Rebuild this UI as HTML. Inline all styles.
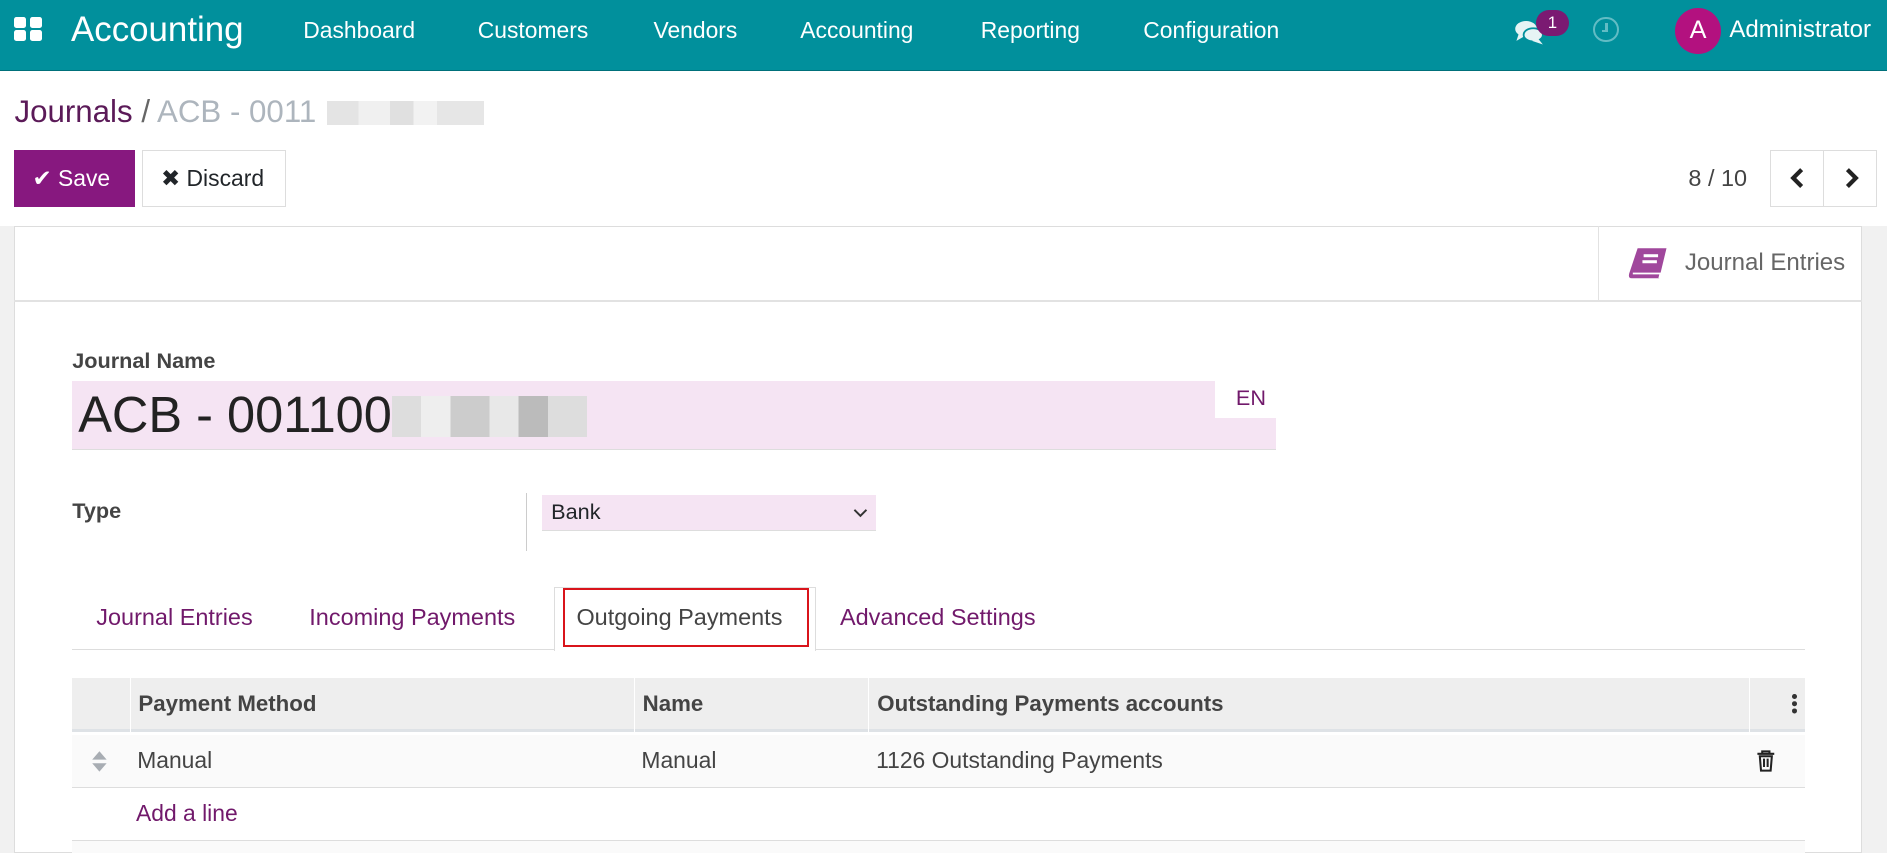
<!DOCTYPE html>
<html><head><meta charset="utf-8"><style>
*{margin:0;padding:0;box-sizing:border-box}
html,body{width:1887px;height:853px;overflow:hidden;background:#fff}
#w{zoom:1.20344;width:1568px;height:709px;position:relative;font-family:"Liberation Sans",sans-serif;color:#212529;overflow:hidden}
.a{position:absolute;white-space:nowrap}
.nav{left:0;top:0;width:1568px;height:59px;background:#01909c;border-bottom:1px solid #00707a}
.nav .m{color:#fff;font-size:19px;top:14px}
.pur{color:#71196b}
.t{font-size:19.5px}
</style></head><body><div id="w">
<div class="a nav">
 <div class="a" style="left:12px;top:14px;width:10px;height:9px;background:#fff;border-radius:2px"></div>
 <div class="a" style="left:25px;top:14px;width:10px;height:9px;background:#fff;border-radius:2px"></div>
 <div class="a" style="left:12px;top:25px;width:10px;height:9px;background:#fff;border-radius:2px"></div>
 <div class="a" style="left:25px;top:25px;width:10px;height:9px;background:#fff;border-radius:2px"></div>
 <div class="a" style="left:59px;top:8px;color:#fff;font-size:29px">Accounting</div>
 <div class="a m" style="left:252px">Dashboard</div>
 <div class="a m" style="left:397px">Customers</div>
 <div class="a m" style="left:543px">Vendors</div>
 <div class="a m" style="left:665px">Accounting</div>
 <div class="a m" style="left:815px">Reporting</div>
 <div class="a m" style="left:950px">Configuration</div>
 <svg class="a" style="left:1258px;top:15px" width="28" height="28" viewBox="0 0 28 28"><ellipse cx="10" cy="9" rx="9" ry="6.5" fill="#e6f4f5"/><path d="M4 13 L2 19 L9 15Z" fill="#e6f4f5"/><ellipse cx="16" cy="14" rx="8" ry="5.5" fill="#e6f4f5" stroke="#01909c" stroke-width="1.5"/><path d="M20 17 L24 22 L15 19Z" fill="#e6f4f5"/></svg>
 <div class="a" style="left:1276px;top:8px;width:28px;height:22px;border-radius:11px;background:#7b1a72;color:#fff;font-size:14px;text-align:center;line-height:21px">1</div>
 <div class="a" style="left:1324px;top:14px;width:21px;height:21px;border-radius:50%;border:2px solid #62bcc4"></div>
 <div class="a" style="left:1334px;top:19px;width:2px;height:7px;background:#62bcc4"></div>
 <div class="a" style="left:1331px;top:25px;width:5px;height:2px;background:#62bcc4"></div>
 <div class="a" style="left:1392px;top:7px;width:38px;height:38px;border-radius:50%;background:#b3117f;color:#fff;font-size:21px;text-align:center;line-height:38px">A</div>
 <div class="a" style="left:1437px;top:13px;color:#fff;font-size:20px">Administrator</div>
</div>
<div class="a" style="left:12px;top:78px;font-size:26px;color:#5b1a58">Journals <span style="color:#666">/</span> <span style="color:#adb5bd">ACB - 0011</span></div>
<div class="a" style="left:272px;top:84px;width:130px;height:20px;background:linear-gradient(90deg,#e4e4e4 0 20%,#f0f0f0 20% 40%,#e0e0e0 40% 55%,#f2f2f2 55% 70%,#e6e6e6 70% 100%)"></div>
<div class="a" style="left:12px;top:125px;width:100px;height:47px;background:#87187f;color:#fff;font-size:19px;line-height:47px;padding-left:15px">✔ Save</div>
<div class="a" style="left:118px;top:125px;width:120px;height:47px;border:1px solid #ddd;font-size:19px;line-height:45px;padding-left:15px">✖ Discard</div>
<div class="a" style="left:1403px;top:137px;font-size:19.5px;color:#444">8 / 10</div>
<div class="a" style="left:1471px;top:125px;width:89px;height:47px;border:1px solid #ddd"></div>
<div class="a" style="left:1515px;top:125px;width:1px;height:47px;background:#ddd"></div>
<svg class="a" style="left:1484px;top:138px" width="20" height="20"><path d="M13 3 L6 10 L13 17" fill="none" stroke="#222" stroke-width="3.5"/></svg>
<svg class="a" style="left:1528px;top:138px" width="20" height="20"><path d="M7 3 L14 10 L7 17" fill="none" stroke="#222" stroke-width="3.5"/></svg>
<div class="a" style="left:0;top:188px;width:1568px;height:521px;background:#f1f1f1"></div>
<div class="a" style="left:12px;top:188px;width:1535px;height:521px;background:#fff;border:1px solid #ddd"></div>
<div class="a" style="left:12px;top:249px;width:1535px;height:2px;background:#e2e2e2"></div>
<div class="a" style="left:1328px;top:188px;width:1px;height:62px;background:#e2e2e2"></div>
<svg class="a" style="left:1353px;top:205px" width="34" height="30" viewBox="0 0 34 30"><path d="M8 1 H32 L26 26 H3 Q0 26 1 22Z" fill="#a0479c"/><rect x="13" y="6" width="12" height="2.5" fill="#fff"/><rect x="12" y="11" width="12" height="2.5" fill="#fff"/><path d="M4 22 H27 L26 26" fill="none" stroke="#fff" stroke-width="1.5"/></svg>
<div class="a" style="left:1400px;top:207px;font-size:20px;color:#666">Journal Entries</div>
<div class="a" style="left:60px;top:289px;font-size:18px;font-weight:bold;color:#444">Journal Name</div>
<div class="a" style="left:60px;top:317px;width:1000px;height:57px;background:#f5e4f3;border-bottom:1px solid #ddd"></div>
<div class="a" style="left:1010px;top:317px;width:50px;height:30px;background:#fff"></div>
<div class="a pur" style="left:1027px;top:320px;font-size:18px">EN</div>
<div class="a" style="left:65px;top:320px;font-size:42px;color:#222">ACB - 001100</div>
<div class="a" style="left:326px;top:329px;width:162px;height:34px;background:linear-gradient(90deg,#ddd 0 15%,#eee 15% 30%,#ccc 30% 50%,#e8e8e8 50% 65%,#bbb 65% 80%,#ddd 80% 100%)"></div>
<div class="a" style="left:60px;top:414px;font-size:18px;font-weight:bold;color:#444">Type</div>
<div class="a" style="left:437px;top:410px;width:1px;height:48px;background:#ccc"></div>
<div class="a" style="left:450px;top:411px;width:278px;height:30px;background:#f5e4f3;border-bottom:1px solid #ddd;font-size:18px;line-height:28px;padding-left:8px">Bank</div>
<svg class="a" style="left:708px;top:420px" width="14" height="14"><path d="M2 4 L7 9 L12 4" fill="none" stroke="#333" stroke-width="1.6"/></svg>
<div class="a" style="left:60px;top:539px;width:1440px;height:1px;background:#ddd"></div>
<div class="a" style="left:460px;top:488px;width:218px;height:53px;background:#fff;border:1px solid #ddd;border-bottom:none"></div>
<div class="a" style="left:468px;top:489px;width:204px;height:49px;border:2px solid #d9141b"></div>
<div class="a pur t" style="left:80px;top:502px">Journal Entries</div>
<div class="a pur t" style="left:257px;top:502px">Incoming Payments</div>
<div class="a t" style="left:479px;top:502px;color:#444">Outgoing Payments</div>
<div class="a pur t" style="left:698px;top:502px">Advanced Settings</div>
<div class="a" style="left:60px;top:563px;width:1440px;height:45px;background:#eee;border-bottom:3px solid #dee2e6"></div>
<div class="a" style="left:108px;top:563px;width:1px;height:45px;background:#fff"></div>
<div class="a" style="left:527px;top:563px;width:1px;height:45px;background:#fff"></div>
<div class="a" style="left:721px;top:563px;width:1px;height:45px;background:#fff"></div>
<div class="a" style="left:1453px;top:563px;width:1px;height:45px;background:#fff"></div>
<div class="a" style="left:115px;top:574px;font-size:18.5px;font-weight:bold;color:#444">Payment Method</div>
<div class="a" style="left:534px;top:574px;font-size:18.5px;font-weight:bold;color:#444">Name</div>
<div class="a" style="left:729px;top:574px;font-size:18.5px;font-weight:bold;color:#444">Outstanding Payments accounts</div>
<div class="a" style="left:1489px;top:577px;width:4px;height:4px;background:#333;border-radius:50%;box-shadow:0 6px #333,0 12px #333"></div>
<div class="a" style="left:60px;top:611px;width:1440px;height:44px;background:#fafafa;border-bottom:1px solid #ddd"></div>
<svg class="a" style="left:76px;top:623px" width="14" height="20"><path d="M7 1 L13 8 H1Z M1 11 H13 L7 18Z" fill="#a8adb3"/></svg>
<div class="a" style="left:114px;top:621px;font-size:19px;color:#444">Manual</div>
<div class="a" style="left:533px;top:621px;font-size:19px;color:#444">Manual</div>
<div class="a" style="left:728px;top:621px;font-size:19px;color:#444">1126 Outstanding Payments</div>
<svg class="a" style="left:1458px;top:622px" width="18" height="20"><path d="M2 4 H16 M6 4 V2 H12 V4 M4 6 L5 18 H13 L14 6Z M7.5 8 V15 M10.5 8 V15" fill="none" stroke="#222" stroke-width="1.7"/></svg>
<div class="a pur" style="left:113px;top:665px;font-size:19px">Add a line</div>
<div class="a" style="left:60px;top:698px;width:1440px;height:1px;background:#ddd"></div>
<div class="a" style="left:60px;top:699px;width:1440px;height:10px;background:#fafafa"></div>
</div></body></html>
